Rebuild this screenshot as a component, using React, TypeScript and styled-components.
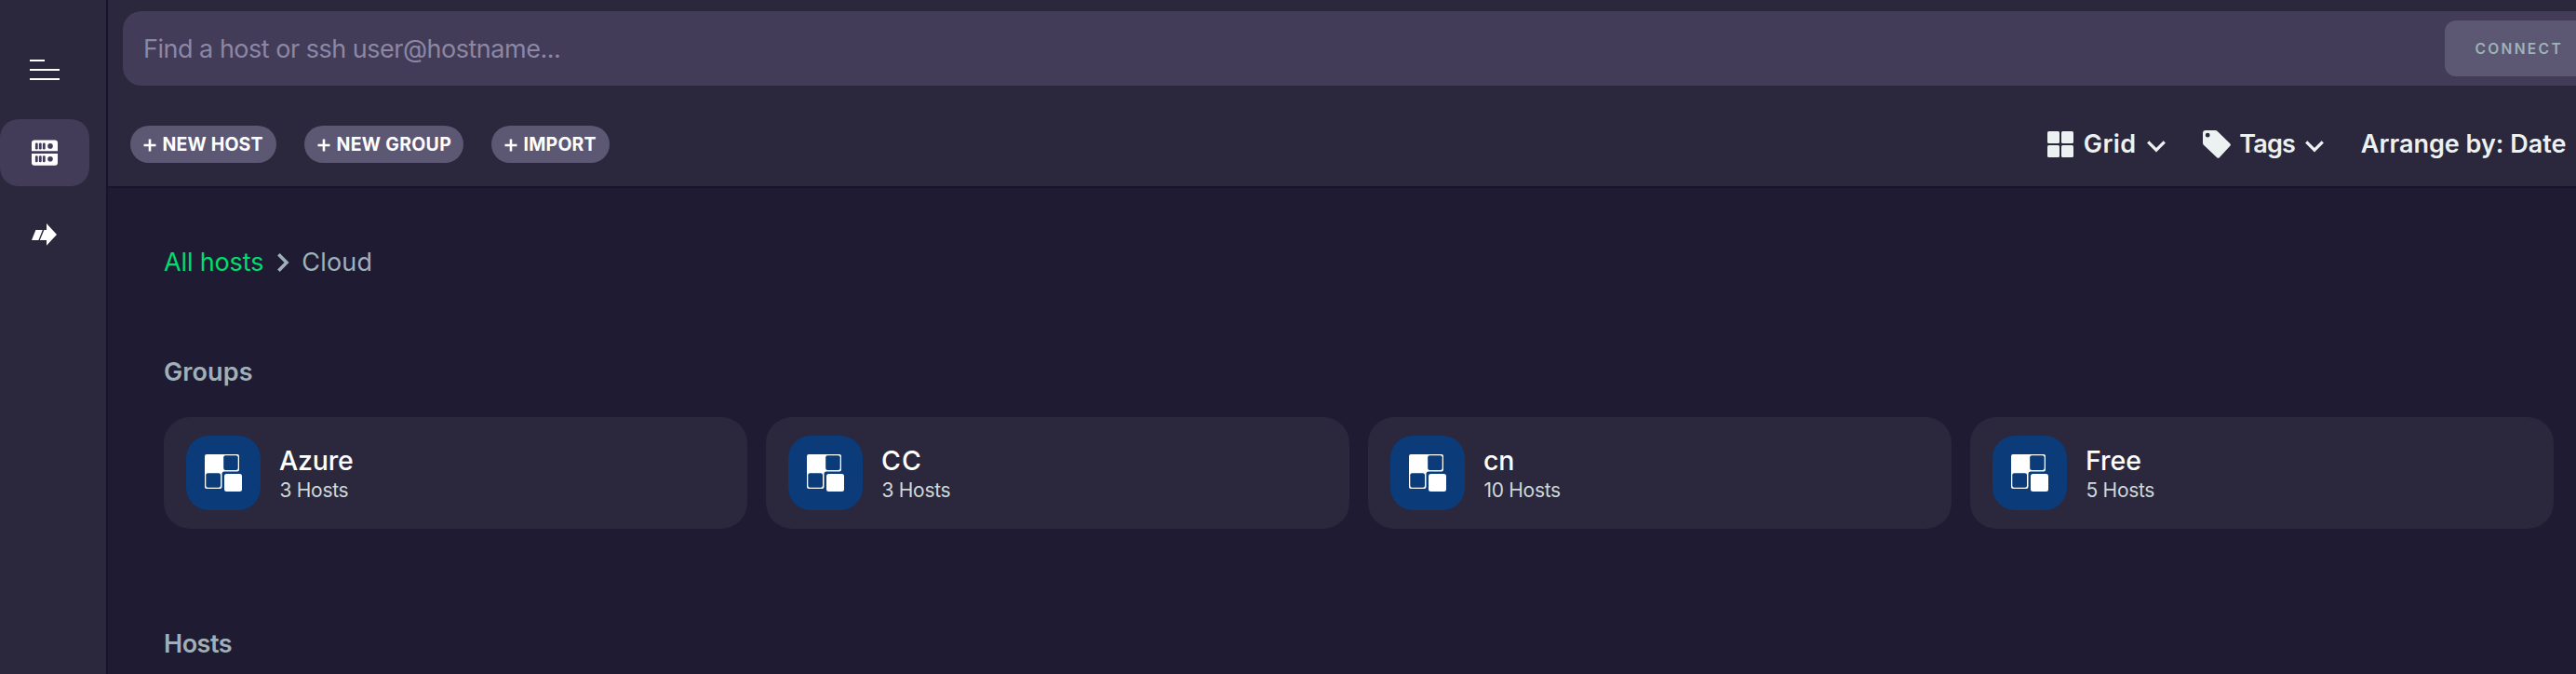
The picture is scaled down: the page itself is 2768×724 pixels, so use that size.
import React from 'react';
import styled, { createGlobalStyle } from 'styled-components';

const GlobalStyle = createGlobalStyle`
  * { box-sizing: border-box; }
  body {
    margin: 0;
    overflow: hidden;
    background: #1f1b33;
    font-family: Inter, "Liberation Sans", sans-serif;
  }
  svg { display: block; flex: none; }
  button, input { font-family: inherit; border: 0; padding: 0; margin: 0; }
`;

const Shell = styled.div`
  display: flex;
  width: 100%;
  height: 724px;
  overflow: hidden;
`;

const Sidebar = styled.nav`
  flex: none;
  width: 116px;
  padding-top: 20px;
  background: #2b273c;
  border-right: 2px solid #17132b;
`;

const NavItem = styled.div<{ $active?: boolean }>`
  display: flex;
  align-items: center;
  justify-content: center;
  width: 96px;
  height: 72px;
  margin-bottom: 16px;
  border-radius: 20px;
  background: ${(p) => (p.$active ? '#423c59' : 'transparent')};

  &:first-child {
    height: 110px;
    margin-bottom: -2px;
  }
`;

const Page = styled.main`
  flex: 1;
  min-width: 0;
  background: #1f1b33;
`;

const Header = styled.header`
  height: 202px;
  padding-top: 12px;
  background: #2b273c;
  border-bottom: 2px solid #17132b;
`;

const SearchBar = styled.div`
  display: flex;
  align-items: center;
  height: 80px;
  margin-left: 16px;
  padding-left: 22px;
  border-radius: 20px 0 0 20px;
  background: #423c59;
`;

const SearchInput = styled.input`
  flex: 1;
  height: 60px;
  background: transparent;
  font-size: 27px;
  letter-spacing: -0.49px;
  outline: none;

  &::placeholder {
    color: #8c87a3;
    opacity: 1;
  }
`;

const ConnectButton = styled.button`
  width: 141px;
  height: 60px;
  padding-left: 32.5px;
  border-radius: 12px 0 0 12px;
  background: #5c5873;
  color: #9fb3ba;
  font-size: 15.6px;
  font-weight: 600;
  letter-spacing: 2.3px;
  text-align: left;
`;

const Toolbar = styled.div`
  display: flex;
  align-items: center;
  justify-content: space-between;
  height: 108px;
  padding: 18px 10.5px 0 24px;
`;

const Actions = styled.div`
  display: flex;
  gap: 30px;
`;

const ActionButton = styled.button<{ $width: number; $tracking: number }>`
  display: flex;
  align-items: center;
  gap: 6.5px;
  width: ${(p) => p.$width}px;
  height: 40px;
  padding: 0 0 1px 14px;
  border-radius: 20px;
  background: #5c5873;
  color: #fff;
  font-size: 19.5px;
  font-weight: 700;
  letter-spacing: ${(p) => p.$tracking}px;
  white-space: nowrap;
`;

const Options = styled.div`
  display: flex;
  align-items: center;
  gap: 40px;
  padding-bottom: 1px;
  color: #ecf2f2;
  font-size: 27px;
  font-weight: 600;
  line-height: 30px;
  white-space: nowrap;
`;

const Option = styled.div<{ $width?: number; $gap?: number; $tracking?: number }>`
  display: flex;
  align-items: center;
  gap: ${(p) => p.$gap ?? 0}px;
  width: ${(p) => (p.$width ? `${p.$width}px` : 'auto')};
  letter-spacing: ${(p) => p.$tracking ?? 0}px;
`;

const OptionChevron = styled.svg`
  margin: 6px 0 0 auto;
`;

const Content = styled.section`
  padding: 65px 24px 0 60px;
`;

const Breadcrumbs = styled.div`
  display: flex;
  align-items: center;
  height: 30px;
  color: #9fb0b8;
  font-size: 27px;
  line-height: 30px;
  letter-spacing: 0.2px;
`;

const CrumbLink = styled.a`
  margin-right: 14.5px;
  color: #00dd6f;
  letter-spacing: -0.14px;
`;

const CrumbCurrent = styled.span`
  margin-left: 13.5px;
`;

const SectionTitle = styled.h2<{ $top: number; $tracking: number }>`
  margin: ${(p) => p.$top}px 0 0;
  color: #9fb0b8;
  font-size: 27px;
  font-weight: 600;
  line-height: 30px;
  letter-spacing: ${(p) => p.$tracking}px;
`;

const GroupGrid = styled.div`
  display: grid;
  grid-template-columns: repeat(4, 1fr);
  gap: 20px;
  margin-top: 33px;
`;

const GroupCard = styled.article`
  display: flex;
  align-items: center;
  gap: 20px;
  height: 120px;
  padding-left: 24px;
  border-radius: 28px;
  background: #2b273c;
`;

const GroupTile = styled.div`
  display: flex;
  align-items: center;
  justify-content: center;
  width: 80px;
  height: 80px;
  border-radius: 24px;
  background: #0b3b78;
`;

const GroupText = styled.div`
  padding-top: 2px;
`;

const GroupName = styled.div<{ $tracking: number }>`
  color: #fff;
  font-size: 28.5px;
  font-weight: 450;
  line-height: 36px;
  letter-spacing: ${(p) => p.$tracking}px;
`;

const GroupCount = styled.div`
  padding-left: 0.5px;
  color: #cdd9da;
  font-size: 21px;
  line-height: 28px;
  letter-spacing: -0.3px;
`;

const MenuIcon = () => (
  <svg width="32" height="22" viewBox="0 0 32 22" fill="#fff">
    <rect width="16" height="2" />
    <rect y="10" width="32" height="2" />
    <rect y="20" width="32" height="2" />
  </svg>
);

const ServerIcon = () => (
  <svg width="28" height="28" viewBox="0 0 28 28" fill="#fff">
    <path d="M3 0.5H25a3 3 0 0 1 3 3V12.3H0V3.5a3 3 0 0 1 3-3ZM0 15H28V24.7a3 3 0 0 1-3 3H3a3 3 0 0 1-3-3Z" />
    <g fill="#423c59">
      {[3.5, 17.3].map((y) => (
        <React.Fragment key={y}>
          <rect x="3.9" y={y} width="2.8" height="7" rx="1.2" />
          <rect x="7.9" y={y} width="2.8" height="7" rx="1.2" />
          <rect x="11.9" y={y} width="2.8" height="7" rx="1.2" />
          <circle cx="20" cy={y + 3.4} r="2.8" />
        </React.Fragment>
      ))}
    </g>
  </svg>
);

const ForwardIcon = () => (
  <svg width="28" height="24" viewBox="0 0 28 24" fill="#fff">
    <path d="M4.4 7H11.8L7.4 18H0Z" />
    <path d="M13.4 7H16V0L27 11.9L16 23.8V18H8.8Z" />
  </svg>
);

const PlusMark = styled.svg`
  margin-top: 3px;
`;

const PlusIcon = () => (
  <PlusMark width="14" height="14" viewBox="0 0 14 14" fill="#fff">
    <path d="M5.7 0.5H8.3V5.7H13.5V8.3H8.3V13.5H5.7V8.3H0.5V5.7H5.7Z" />
  </PlusMark>
);

const GridIcon = () => (
  <svg width="28" height="28" viewBox="0 0 28 28" fill="#ecf2f2">
    <rect width="13" height="13" rx="1.5" />
    <rect x="15" width="13" height="13" rx="1.5" />
    <rect y="15" width="13" height="13" rx="1.5" />
    <rect x="15" y="15" width="13" height="13" rx="1.5" />
  </svg>
);

const TagIcon = () => (
  <svg width="30" height="30" viewBox="0 0 30 30" fill="#ecf2f2">
    <path
      fillRule="evenodd"
      d="M3 0H13.5Q14.8 0 15.7 0.9L29.3 14.2Q30.5 15.5 29.3 16.8L17.8 29.2Q16.5 30.4 15.2 29.2L0.9 15.7Q0 14.8 0 13.5V3Q0 0 3 0ZM5.2 2.8a2.4 2.4 0 1 0 0 4.8a2.4 2.4 0 0 0 0-4.8Z"
    />
  </svg>
);

const ChevronDown = () => (
  <OptionChevron width="20" height="13" viewBox="0 0 20 13" fill="none" stroke="#ecf2f2" strokeWidth="3.2">
    <path d="M1.2 1.4L10 10.2L18.8 1.4" />
  </OptionChevron>
);

const ChevronRight = () => (
  <svg width="13" height="20" viewBox="0 0 13 20" fill="none" stroke="#9fb0b8" strokeWidth="3.6">
    <path d="M1.4 1.3L10 10L1.4 18.7" />
  </svg>
);

const GroupIcon = () => (
  <svg width="40" height="40" viewBox="0 0 40 40">
    <path
      fill="#fff"
      d="M2 0H35a2 2 0 0 1 2 2V16.5a2 2 0 0 1-2 2H21a2.5 2.5 0 0 0-2.5 2.5V35a2 2 0 0 1-2 2H2a2 2 0 0 1-2-2V2a2 2 0 0 1 2-2Z"
    />
    <rect x="20.2" y="1.3" width="15.5" height="15.7" rx="2" fill="#0b3b78" />
    <rect x="1.3" y="20.2" width="15.7" height="15.5" rx="2" fill="#0b3b78" />
    <rect x="21" y="21" width="19" height="19" rx="2.5" fill="#fff" />
  </svg>
);

const actions = [
  { label: 'NEW HOST', width: 157, tracking: 0.15 },
  { label: 'NEW GROUP', width: 171, tracking: 0.3 },
  { label: 'IMPORT', width: 127, tracking: 0.2 },
];

const groups = [
  { name: 'Azure', hosts: 3, tracking: -0.2 },
  { name: 'CC', hosts: 3, tracking: 1.2 },
  { name: 'cn', hosts: 10, tracking: -0.3 },
  { name: 'Free', hosts: 5, tracking: 0 },
];

export default function App() {
  return (
    <Shell>
      <GlobalStyle />
      <Sidebar>
        <NavItem>
          <MenuIcon />
        </NavItem>
        <NavItem $active>
          <ServerIcon />
        </NavItem>
        <NavItem>
          <ForwardIcon />
        </NavItem>
      </Sidebar>
      <Page>
        <Header>
          <SearchBar>
            <SearchInput placeholder="Find a host or ssh user@hostname..." />
            <ConnectButton>CONNECT</ConnectButton>
          </SearchBar>
          <Toolbar>
            <Actions>
              {actions.map((a) => (
                <ActionButton key={a.label} $width={a.width} $tracking={a.tracking}>
                  <PlusIcon />
                  {a.label}
                </ActionButton>
              ))}
            </Actions>
            <Options>
              <Option $width={127} $gap={11} $tracking={0.4}>
                <GridIcon />
                Grid
                <ChevronDown />
              </Option>
              <Option $width={130} $gap={9.5} $tracking={-0.9}>
                <TagIcon />
                Tags
                <ChevronDown />
              </Option>
              <Option>Arrange by: Date</Option>
            </Options>
          </Toolbar>
        </Header>
        <Content>
          <Breadcrumbs>
            <CrumbLink>All hosts</CrumbLink>
            <ChevronRight />
            <CrumbCurrent>Cloud</CrumbCurrent>
          </Breadcrumbs>
          <SectionTitle $top={88} $tracking={0.1}>
            Groups
          </SectionTitle>
          <GroupGrid>
            {groups.map((g) => (
              <GroupCard key={g.name}>
                <GroupTile>
                  <GroupIcon />
                </GroupTile>
                <GroupText>
                  <GroupName $tracking={g.tracking}>{g.name}</GroupName>
                  <GroupCount>{g.hosts} Hosts</GroupCount>
                </GroupText>
              </GroupCard>
            ))}
          </GroupGrid>
          <SectionTitle $top={109} $tracking={-0.5}>
            Hosts
          </SectionTitle>
        </Content>
      </Page>
    </Shell>
  );
}
